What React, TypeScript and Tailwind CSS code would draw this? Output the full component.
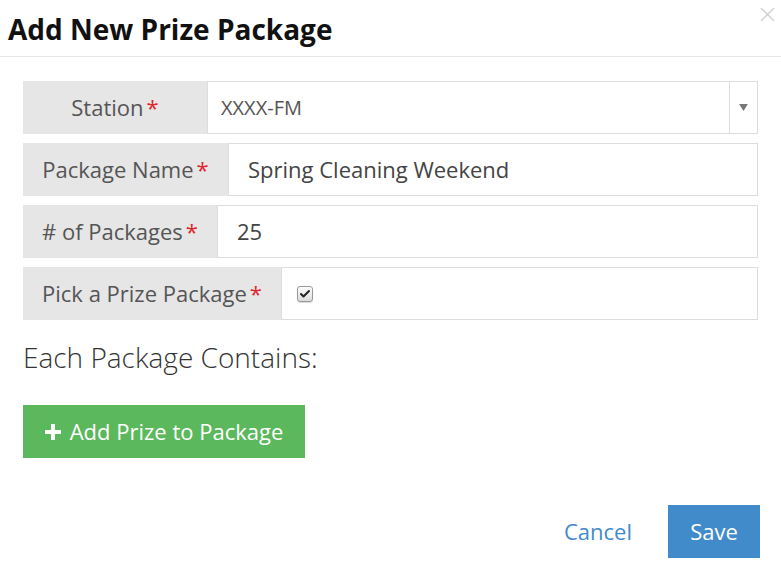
import { Check } from "lucide-react";

const ROWS = [
  { label: "Package Name", value: "Spring Cleaning Weekend", w: "w-[205px]" },
  { label: "# of Packages", value: "25", w: "w-[194px]" },
];

function Label({ text, className }: { text: string; className: string }) {
  return (
    <div className={`${className} flex h-full shrink-0 items-center justify-center bg-[#e6e6e6] text-[22px] text-[#555]`}>
      {text}
      <span className="ml-[3px] text-[#e0242c]">*</span>
    </div>
  );
}

export default function App() {
  return (
    <div className="relative h-[573px] w-[781px] bg-white font-['Open_Sans',sans-serif] text-[#555]">
      <div className="flex h-[57px] items-center border-b border-[#e8e8e8] px-[8px]">
        <h1 className="mt-[2px] text-[28px] font-bold leading-none text-[#111]">Add New Prize Package</h1>
      </div>
      <button
        aria-label="Close"
        className="absolute right-[5px] top-[6px] flex size-[17px] items-center justify-center text-[#cfcfcf]"
      >
        <svg viewBox="0 0 16 16" className="size-[15px]" stroke="currentColor" strokeWidth="1.4" fill="none">
          <path d="M1 1 15 15M15 1 1 15" />
        </svg>
      </button>

      <div className="flex flex-col px-[23px] pt-[24px]">
        <div className="flex h-[53px] w-[735px]">
          <Label text="Station" className="w-[184px]" />
          <div className="flex flex-1 items-center border border-[#ddd]">
            <span className="flex-1 pl-[13px] text-[20px] text-[#555]">XXXX-FM</span>
            <div className="flex h-full w-[28px] items-center justify-center border-l border-[#ddd]">
              <svg viewBox="0 0 10 8" className="h-[7px] w-[9px]" fill="#777">
                <path d="M0 0h10L5 8z" />
              </svg>
            </div>
          </div>
        </div>

        {ROWS.map((r) => (
          <div key={r.label} className="mt-[9px] flex h-[53px] w-[735px]">
            <Label text={r.label} className={r.w} />
            <div className="flex flex-1 items-center border border-[#ddd] pl-[19px] text-[22px] text-[#444]">
              {r.value}
            </div>
          </div>
        ))}

        <div className="mt-[9px] flex h-[53px] w-[735px]">
          <Label text="Pick a Prize Package" className="w-[258px]" />
          <div className="flex flex-1 items-center border border-[#ddd] pl-[15px]">
            <span className="flex size-[16px] items-center justify-center rounded-[3px] border border-[#9a9a9a] bg-gradient-to-b from-[#fdfdfd] to-[#dcdcdc] shadow-[0_1px_1px_rgba(0,0,0,0.15)]">
              <Check className="size-[12px] text-[#222]" strokeWidth={4} />
            </span>
          </div>
        </div>

        <p className="mt-[20px] font-['Open_Sans_Light','Open_Sans',sans-serif] text-[28px] font-light leading-[35px] text-[#333]">
          Each Package Contains:
        </p>

        <button className="mt-[30px] flex h-[53px] w-[282px] items-center justify-center bg-[#5cb85c] text-[22px] text-white">
          <svg viewBox="0 0 16 16" className="mr-[9px] size-[16px]" fill="white">
            <path d="M6 0h4v6h6v4h-6v6H6v-6H0V6h6z" />
          </svg>
          Add Prize to Package
        </button>

        <div className="mt-[47px] flex items-center justify-end">
          <button className="mr-[36px] text-[22px] text-[#428bca]">Cancel</button>
          <button className="mr-[-2px] h-[53px] w-[92px] bg-[#428bca] text-[22px] text-white">Save</button>
        </div>
      </div>
    </div>
  );
}
